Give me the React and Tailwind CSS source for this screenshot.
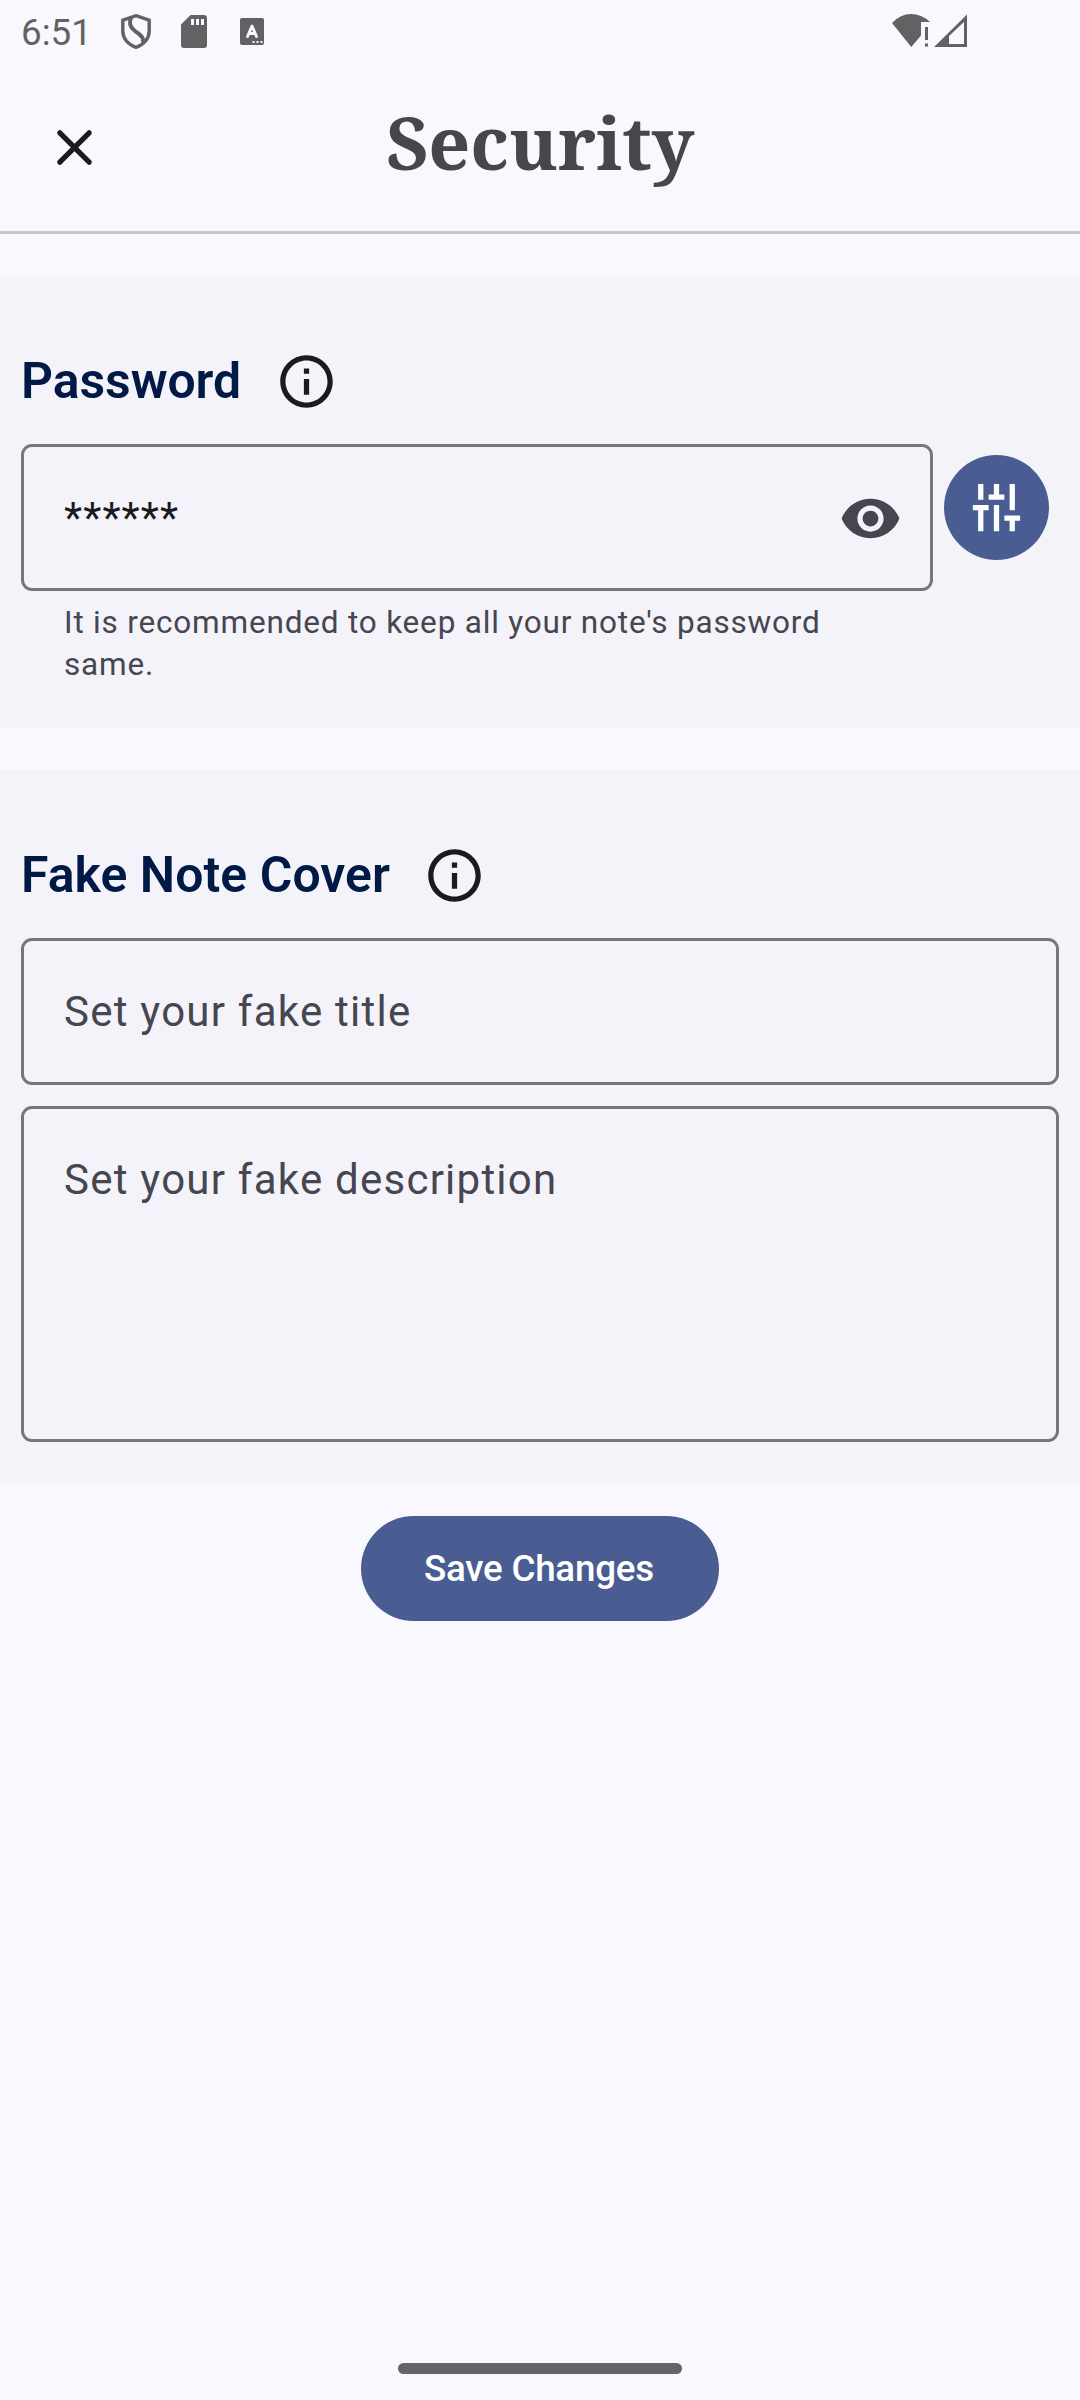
function InfoIcon() {
  return (
    <svg className="size-[63px] shrink-0" viewBox="0 0 24 24" fill="#1a1b20">
      <path d="M11 7h2v2h-2zm0 4h2v6h-2zm1-9C6.48 2 2 6.48 2 12s4.48 10 10 10 10-4.48 10-10S17.52 2 12 2m0 18c-4.41 0-8-3.59-8-8s3.59-8 8-8 8 3.59 8 8-3.59 8-8 8" />
    </svg>
  );
}

function StatusBar() {
  return (
    <div className="flex h-[63px] items-start text-[#626264]">
      <div className="ml-[21px] mt-[11px] h-[43px] w-[100px] text-[36.75px] leading-[43px]">6:51</div>
      <svg className="mt-[14px] h-[35px] w-[30px]" viewBox="0 0 30 35" fill="none" stroke="currentColor" strokeWidth="3.4">
        <path d="M15 1.700 28.200 6.200V17c0 7.500-5.200 13.700-13.200 16.300C7 30.700 1.800 24.500 1.800 17V6.200Z" />
        <path d="M10 3.500C8 9 8.500 12.500 14 17c6.500 5 9 6.500 8 11.500" strokeWidth="4" />
      </svg>
      <svg className="ml-[30px] mt-[15px] h-[33px] w-[26px]" viewBox="0 0 26 33">
        <path fill="currentColor" d="M9.500 0H23a3 3 0 0 1 3 3V30a3 3 0 0 1-3 3H3a3 3 0 0 1-3-3V9.500Z" />
        <path fill="#faf8ff" d="M10 4h3v6h-3zM15 4h3v6h-3zM20 4h3v6h-3z" />
      </svg>
      <svg className="ml-[33px] mt-[18px] h-[27px] w-[24px]" viewBox="0 0 24 27">
        <rect width="24" height="27" rx="2" fill="currentColor" />
        <path d="M7.500 18.500 12 8l4.500 10.500M9 15.500h6" fill="none" stroke="#faf8ff" strokeWidth="2.900" strokeLinecap="round" strokeLinejoin="round" />
        <path fill="#faf8ff" d="M12.500 23h2v2h-2zM16.500 23h2v2h-2zM20.500 23h2v2h-2z" />
      </svg>
      <svg className="ml-[628px] mt-[14px] h-[33px] w-[38px]" viewBox="0 0 38 33" fill="currentColor">
        <path d="M0 9Q8.500 0 19 0t19 8H29V21.500L19.300 33Z" />
        <path d="M33 13h3v13h-3zM33 29.500h3v3h-3z" />
      </svg>
      <svg className="ml-[4px] mt-[14px] h-[33px] w-[33px]" viewBox="0 0 33 33" fill="currentColor">
        <path fillRule="evenodd" d="M0 33 33 .5V33ZM15 22V30H30V8Z" />
      </svg>
    </div>
  );
}

export default function App() {
  return (
    <div className="flex h-[2400px] w-[1080px] flex-col bg-[#faf8ff] font-[Roboto,sans-serif] text-[#1a1b20]">
      <StatusBar />
      <header className="grid h-[168px] grid-cols-[1fr_auto_1fr] items-center">
        <svg className="ml-[43px] size-[63px]" viewBox="0 0 24 24" fill="#1a1b20">
          <path d="M18.300 5.710a.996.996 0 0 0-1.410 0L12 10.590 7.110 5.700A.996.996 0 1 0 5.700 7.110L10.590 12 5.700 16.890a.996.996 0 1 0 1.410 1.410L12 13.410l4.890 4.890a.996.996 0 1 0 1.410-1.410L13.410 12l4.890-4.890c.380-.380.380-1.020 0-1.400" />
        </svg>
        <h1 className="pb-[10px] font-['Noto_Serif','Liberation_Serif',serif] text-[73.5px] font-bold leading-[94px] tracking-[-0.1px] text-[#47474b]">Security</h1>
      </header>
      <div className="h-[3px] shrink-0 bg-[#c8c7d0]" />

      <section className="mt-[42px] h-[452px] shrink-0 bg-[#f4f3fa] px-[21px] pt-[74px]">
        <div className="flex h-[63px] items-center">
          <h2 className="w-[254px] whitespace-nowrap text-[49.9px] font-semibold leading-[63px] tracking-[-0.05px] text-[#001945]">Password</h2>
          <InfoIcon />
        </div>
        <div className="mt-[31px] flex gap-[11px]">
          <div className="w-[912px]">
            <div className="flex h-[147px] items-center justify-between rounded-[11px] border-[3px] border-[#757680] pl-[40px] pr-[28px]">
              <span className="text-[42px] leading-[63px] tracking-[1.1px]">******</span>
              <svg className="mt-[2px] size-[63px]" viewBox="0 0 24 24" fill="#45464f">
                <path d="M12 4.500C7 4.500 2.730 7.610 1 12c1.730 4.390 6 7.500 11 7.500s9.270-3.110 11-7.500c-1.730-4.390-6-7.500-11-7.500M12 17c-2.760 0-5-2.240-5-5s2.240-5 5-5 5 2.240 5 5-2.240 5-5 5m0-8c-1.660 0-3 1.340-3 3s1.340 3 3 3 3-1.340 3-3-1.340-3-3-3" />
              </svg>
            </div>
            <p className="mt-[11px] w-[826px] pl-[43px] text-[31.5px] leading-[42px] tracking-[0.81px] text-[#45464f]">
              It is recommended to keep all your note's password same.
            </p>
          </div>
          <button className="mt-[11px] flex size-[105px] items-center justify-center rounded-full bg-[#495d92]">
            <svg className="size-[63px]" viewBox="0 0 24 24" fill="#fff">
              <path d="M5 3h2v6H5zM3 11h6v2H7v8H5v-8H3zM11 3h2v4h2v2H9V7h2zM11 11h2v10h-2zM17 3h2v10h-2zM15 15h6v2h-2v4h-2v-4h-2z" />
            </svg>
          </button>
        </div>
      </section>

      <section className="mt-[42px] h-[714px] shrink-0 bg-[#f4f3fa] px-[21px] pt-[74px]">
        <div className="flex h-[63px] items-center">
          <h2 className="w-[402px] whitespace-nowrap text-[49.9px] font-semibold leading-[63px] tracking-[0.07px] text-[#001945]">Fake Note Cover</h2>
          <InfoIcon />
        </div>
        <div className="mt-[31px] flex h-[147px] items-center rounded-[11px] border-[3px] border-[#757680] pl-[40px] text-[42px] tracking-[1.24px] text-[#45464f]">
          Set your fake title
        </div>
        <div className="mt-[21px] h-[336px] rounded-[11px] border-[3px] border-[#757680] pl-[40px] pt-[39px] text-[42px] leading-[63px] tracking-[1.24px] text-[#45464f]">
          Set your fake description
        </div>
      </section>

      <button className="mt-[32px] flex h-[105px] w-[358px] shrink-0 items-center self-center rounded-full bg-[#495d92] pl-[63px] text-[36.75px] font-medium tracking-[-0.24px] text-white">
        Save Changes
      </button>
      <div className="mb-[26px] mt-auto h-[11px] w-[284px] self-center rounded-full bg-[#656567]" />
    </div>
  );
}
